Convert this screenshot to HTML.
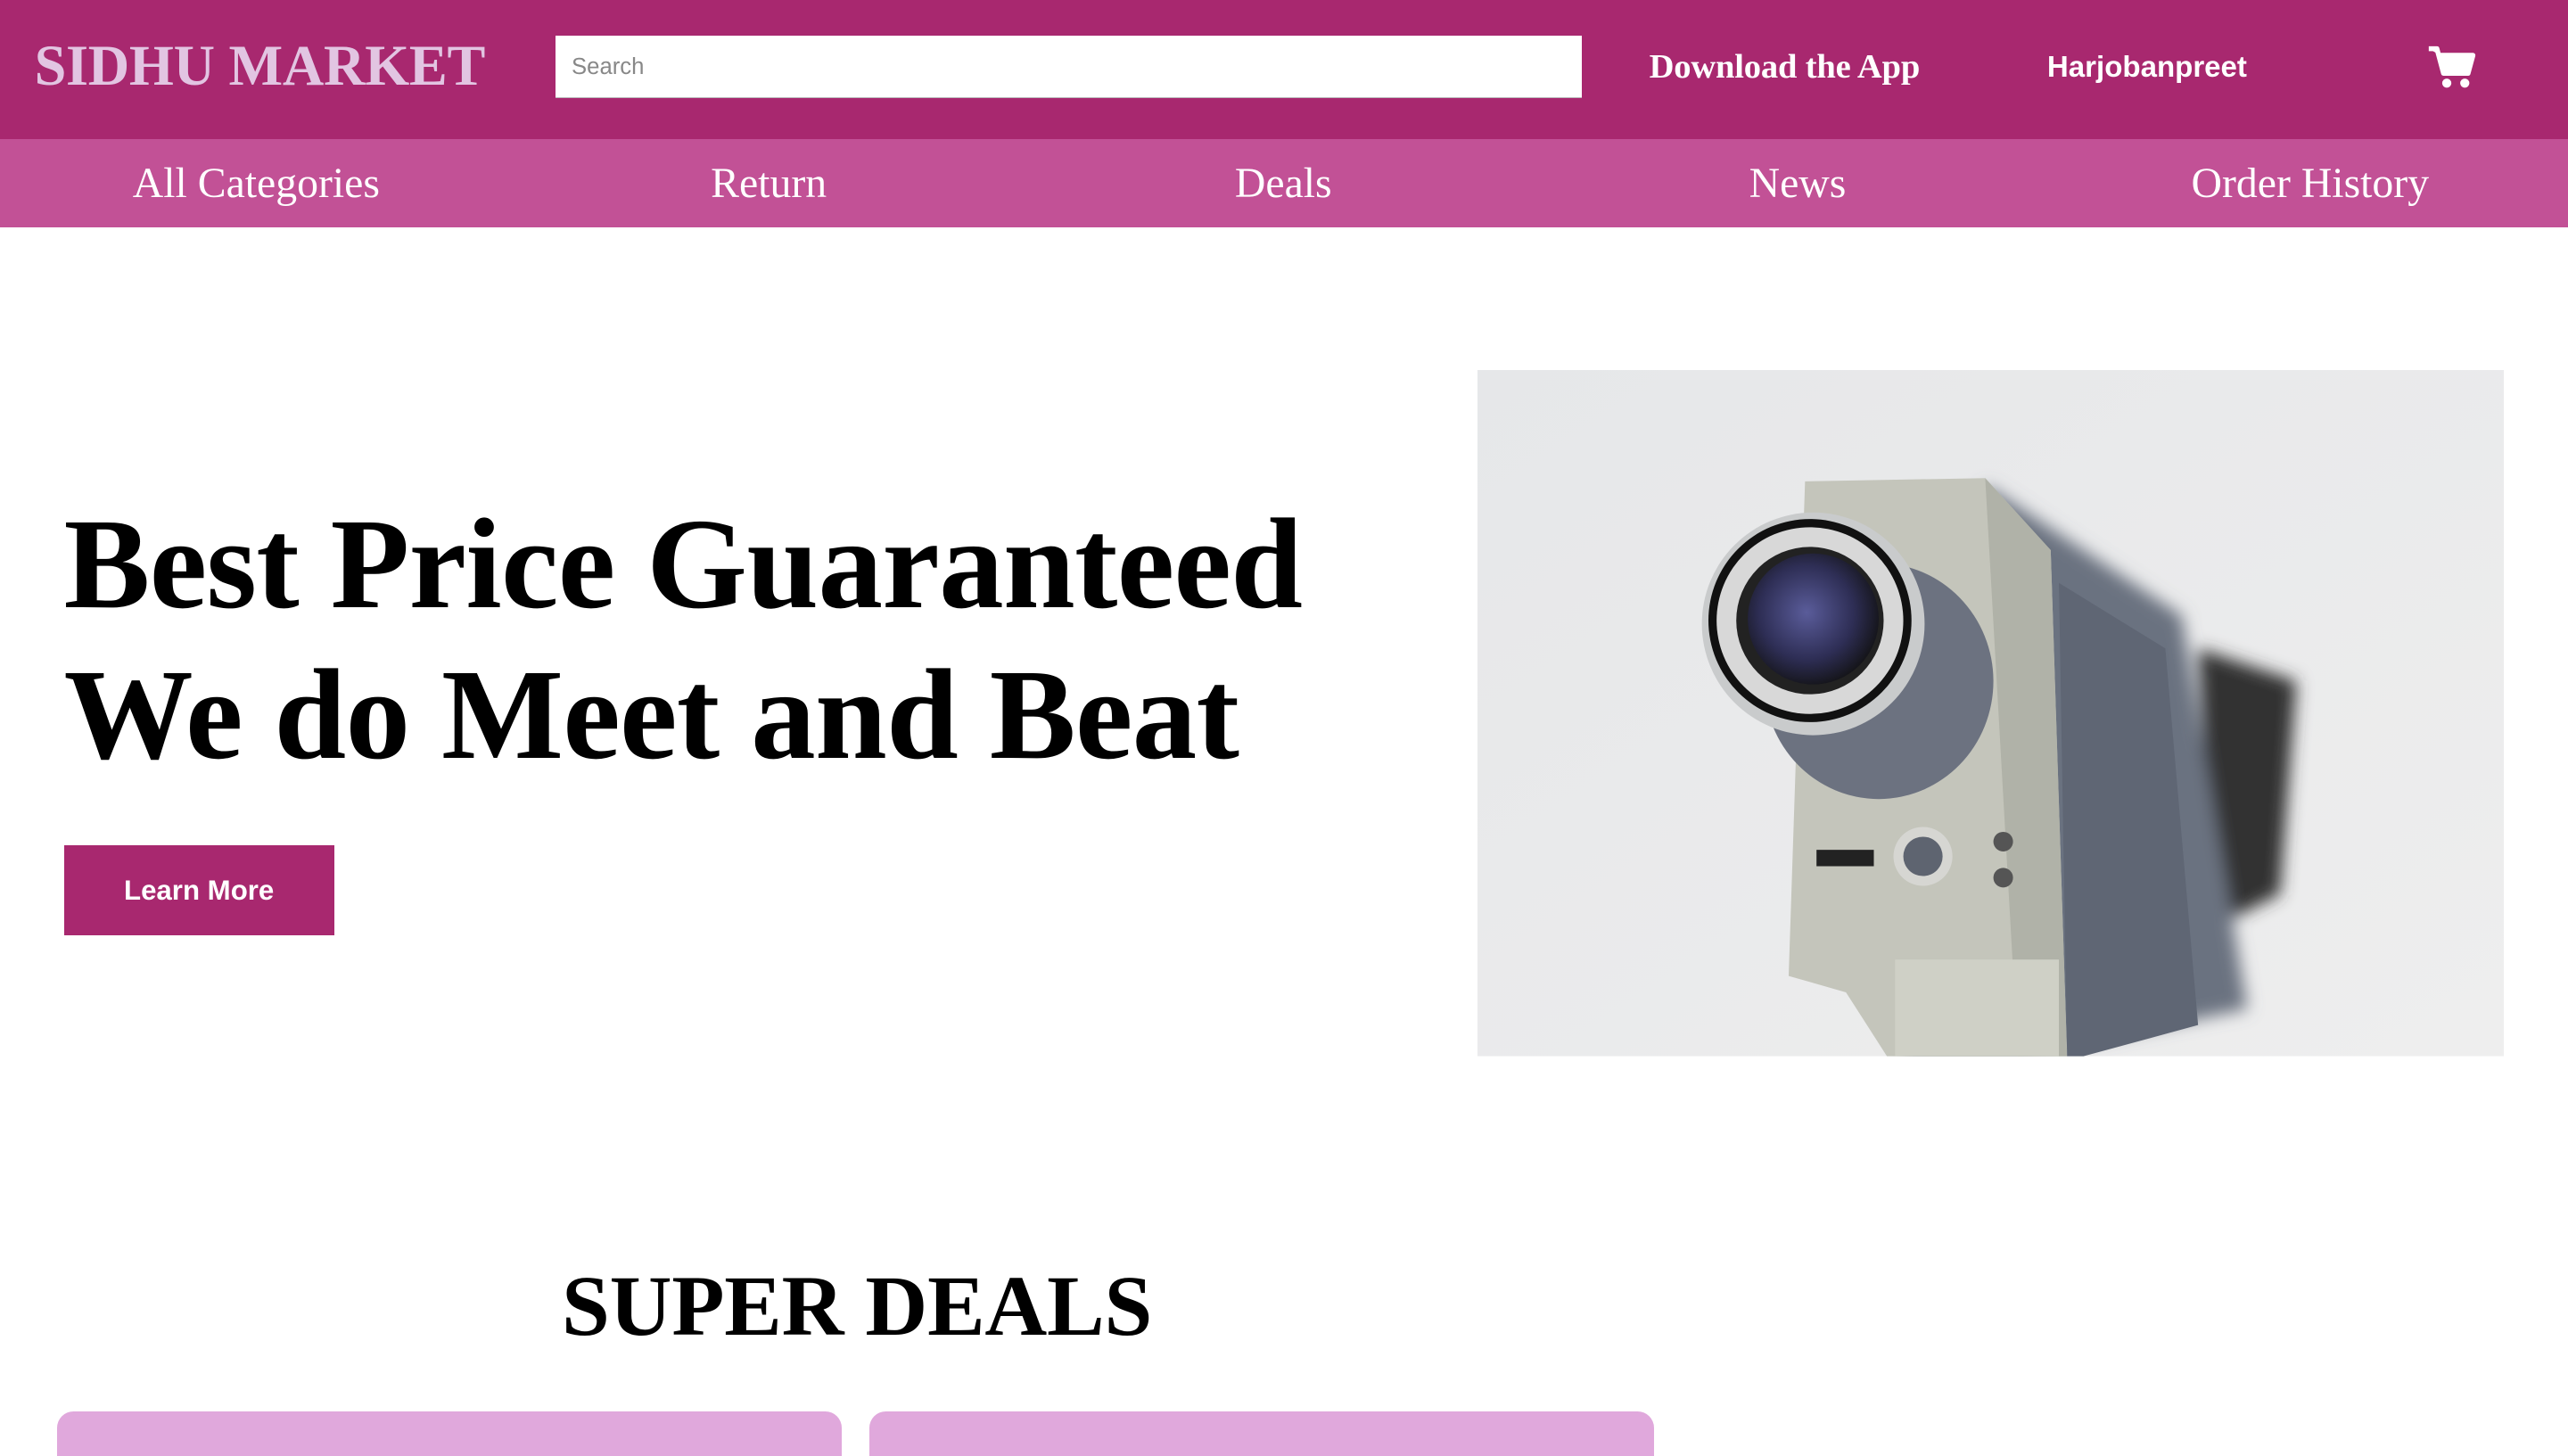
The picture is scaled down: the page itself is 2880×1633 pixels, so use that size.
<!DOCTYPE html>
<html><head><meta charset="utf-8"><style>
html,body{margin:0;padding:0;background:#fff;overflow:hidden}
body{zoom:1.83673;width:1568px;height:889px;position:relative;font-family:"Liberation Serif",serif}
.top{position:absolute;left:0;top:0;width:1568px;height:85px;background:#a8286f}
.logo{position:absolute;left:21px;top:20px;font-size:35px;font-weight:bold;color:#e2c5e2;letter-spacing:-0.15px}
.search{position:absolute;left:339px;top:22px;width:627px;height:38px;background:#fff;border-bottom:1px solid #bbb;box-sizing:border-box}
.search span{position:absolute;left:10px;top:11px;font:14px "Liberation Sans",sans-serif;color:#888}
.dl{position:absolute;left:1007px;top:29px;font-size:21px;font-weight:bold;color:#fff;letter-spacing:-0.1px}
.user{position:absolute;left:1250px;top:31px;font:bold 18px "Liberation Sans",sans-serif;color:#fff}
.nav{position:absolute;left:0;top:85px;width:1568px;height:54px;background:#c25196}
.nav span{position:absolute;top:12px;font-size:26px;color:#fff}
h1{position:absolute;left:39px;top:299px;margin:0;font-size:79px;line-height:92px;font-weight:bold;color:#000;letter-spacing:-0.35px}
.btn{position:absolute;left:39px;top:516px;width:165px;height:55px;background:#a8286f;color:#fff;font:bold 17px "Liberation Sans",sans-serif;text-align:center;line-height:55px}
.img{position:absolute;left:902px;top:226px;width:627px;height:419px}
h2{position:absolute;left:343px;top:767px;margin:0;font-size:52.7px;font-weight:bold;letter-spacing:-0.1px}
.card{position:absolute;top:862px;width:479px;height:40px;background:#e0a8dc;border-radius:10px}
</style></head><body>
<div class="top">
<div class="logo">SIDHU MARKET</div>
<div class="search"><span>Search</span></div>
<div class="dl">Download the App</div>
<div class="user">Harjobanpreet</div>
<svg style="position:absolute;left:1482px;top:28px" width="30" height="28" viewBox="0 0 30 28"><path d="M1 2h5l4 15h15l3-11H8" fill="#fff" stroke="#fff" stroke-width="3" stroke-linejoin="round"/><circle cx="12" cy="23" r="2.8" fill="#fff"/><circle cx="23" cy="23" r="2.8" fill="#fff"/></svg>
</div>
<div class="nav">
<span style="left:81px">All Categories</span>
<span style="left:434px">Return</span>
<span style="left:754px">Deals</span>
<span style="left:1068px">News</span>
<span style="left:1338px">Order History</span>
</div>
<h1>Best Price Guaranteed<br>We do Meet and Beat</h1>
<div class="btn">Learn More</div>
<svg class="img" viewBox="0 0 627 419">
<defs><linearGradient id="bg" x1="0" y1="0" x2="1" y2="1"><stop offset="0" stop-color="#e6e7e9"/><stop offset="1" stop-color="#eeeeee"/></linearGradient>
<filter id="b"><feGaussianBlur stdDeviation="5"/></filter>
<radialGradient id="lens" cx=".45" cy=".45" r=".6"><stop offset="0" stop-color="#5a5c9a"/><stop offset=".6" stop-color="#2e2e55"/><stop offset="1" stop-color="#111"/></radialGradient></defs>
<rect width="627" height="419" fill="url(#bg)"/>
<g filter="url(#b)"><path d="M440 170 L500 190 L490 320 L450 340 Z" fill="#333"/><path d="M310 70 L430 150 L470 390 L330 419 L260 419 Z" fill="#6b7280"/></g>
<path d="M200 68 L310 66 L350 110 L360 419 L250 419 L225 380 L190 370 Z" fill="#c4c5bb"/>
<path d="M310 66 L350 110 L360 419 L330 419 Z" fill="#b0b2a8"/>
<path d="M355 130 L420 170 L440 400 L370 419 L360 419 Z" fill="#5f6674"/>
<rect x="255" y="360" width="100" height="59" fill="#cfd0c6"/>
<ellipse cx="245" cy="190" rx="70" ry="72" fill="#6c7280"/>
<circle cx="205" cy="155" r="68" fill="#c9cbcc"/>
<circle cx="203" cy="153" r="62" fill="#111"/>
<circle cx="203" cy="153" r="57" fill="#d8d8d8"/>
<circle cx="203" cy="153" r="45" fill="#222"/>
<circle cx="205" cy="152" r="40" fill="url(#lens)"/>
<circle cx="272" cy="297" r="18" fill="#d6d6d2"/><circle cx="272" cy="297" r="12" fill="#5e6470"/>
<rect x="207" y="293" width="35" height="10" fill="#222"/>
<circle cx="321" cy="288" r="6" fill="#555"/><circle cx="321" cy="310" r="6" fill="#555"/>
</svg>
<h2>SUPER DEALS</h2>
<div class="card" style="left:35px"></div>
<div class="card" style="left:531px"></div>
</body></html>
